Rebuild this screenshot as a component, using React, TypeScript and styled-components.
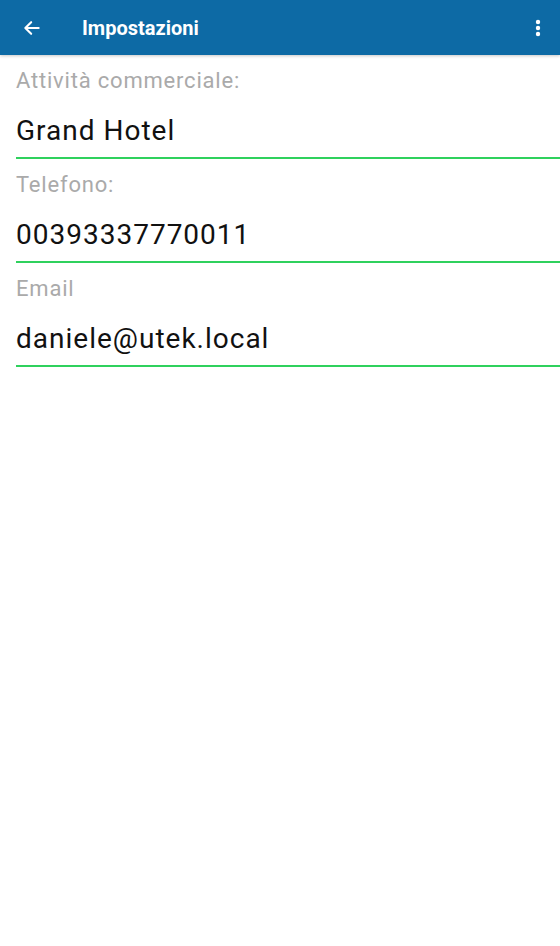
import React from 'react';
import styled, { createGlobalStyle } from 'styled-components';

const GlobalStyle = createGlobalStyle`
  html, body {
    margin: 0;
    padding: 0;
    background: #ffffff;
  }
  body {
    font-family: Roboto, 'Noto Sans', sans-serif;
  }
`;

const Page = styled.div`
  width: 560px;
  min-height: 946px;
  background: #ffffff;
`;

const Toolbar = styled.header`
  height: 55px;
  background: #0d6aa5;
  display: flex;
  align-items: center;
  box-shadow: 0 1px 3px rgba(0, 0, 0, 0.22);
  position: relative;
  z-index: 1;
`;

const IconButton = styled.button`
  width: 64px;
  height: 55px;
  border: 0;
  padding: 0;
  background: transparent;
  display: flex;
  align-items: center;
  justify-content: center;
  color: #ffffff;
`;

const Title = styled.h1`
  flex: 1;
  margin: 0 0 0 18px;
  color: #ffffff;
  font-family: Roboto, sans-serif;
  font-weight: 700;
  font-size: 20px;
`;

const MenuButton = styled(IconButton)`
  width: 44px;
`;

const Form = styled.div`
  display: flex;
  flex-direction: column;
  padding-left: 16px;
  padding-top: 14px;
`;

const Field = styled.label`
  display: flex;
  flex-direction: column;
  height: 104px;
`;

const Label = styled.span`
  color: #aaaaaa;
  font-size: 22px;
  letter-spacing: 0.8px;
  line-height: 24px;
`;

const Input = styled.input`
  border: 0;
  border-bottom: 2px solid #2fd15d;
  outline: none;
  padding: 0;
  margin-top: 11px;
  height: 53px;
  font-family: Roboto, sans-serif;
  font-size: 28px;
  letter-spacing: 1px;
  color: #111111;
  background: transparent;
`;

const fields = [
  { label: 'Attività commerciale:', value: 'Grand Hotel' },
  { label: 'Telefono:', value: '00393337770011' },
  { label: 'Email', value: 'daniele@utek.local' },
];

export default function App() {
  return (
    <Page>
      <GlobalStyle />
      <Toolbar>
        <IconButton aria-label="Indietro">
          <svg width="20" height="20" viewBox="0 0 24 24" fill="none" stroke="#fff" strokeWidth="2.5" strokeLinecap="round" strokeLinejoin="round">
            <path d="M20 12H5" />
            <path d="M11 5l-7 7 7 7" />
          </svg>
        </IconButton>
        <Title>Impostazioni</Title>
        <MenuButton aria-label="Menu">
          <svg width="6" height="20" viewBox="0 0 6 20" fill="#fff">
            <circle cx="3" cy="4" r="2.2" />
            <circle cx="3" cy="10" r="2.2" />
            <circle cx="3" cy="16" r="2.2" />
          </svg>
        </MenuButton>
      </Toolbar>
      <Form>
        {fields.map((f) => (
          <Field key={f.label}>
            <Label>{f.label}</Label>
            <Input defaultValue={f.value} />
          </Field>
        ))}
      </Form>
    </Page>
  );
}
